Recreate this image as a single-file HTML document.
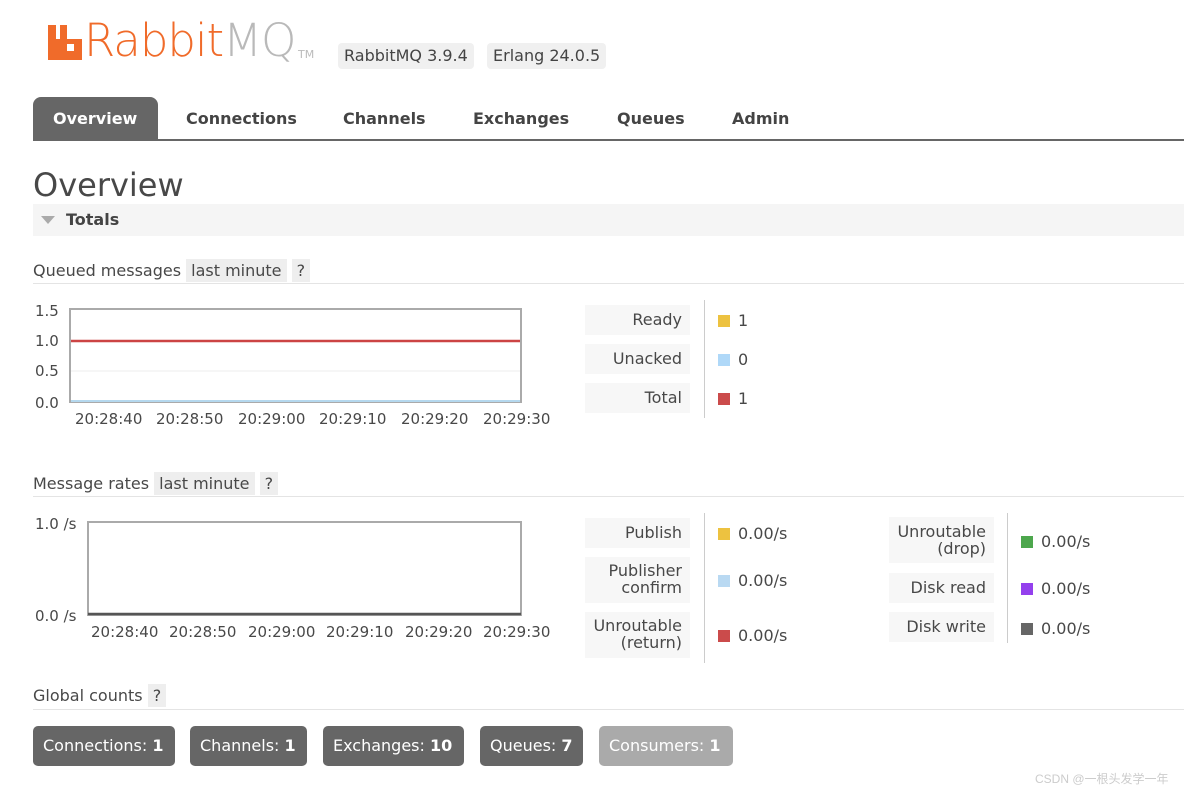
<!DOCTYPE html>
<html><head><meta charset="utf-8"><style>
*{margin:0;padding:0;box-sizing:border-box}
body{width:1184px;height:790px;background:#fff;position:relative;overflow:hidden;font-family:"DejaVu Sans","Liberation Sans",sans-serif;font-size:16px;color:#484848}
.a{position:absolute;white-space:nowrap}
.pill{background:#f0f0f0;border-radius:4px;padding:0 6px;height:26px;line-height:26px}
.tab{position:absolute;top:97px;height:43px;line-height:44px;font-weight:bold;color:#444}
.lbl{position:absolute;background:#f7f7f7;text-align:right;padding-right:8px;line-height:17px;width:106px}
.sw{display:inline-block;width:12px;height:12px;margin-right:8px;vertical-align:-1px}
.btn{position:absolute;top:726px;height:40px;line-height:40px;background:#666;color:#fff;border-radius:5px;padding:0 10px}
.btn b{font-weight:bold}
.hr{position:absolute;height:1px;background:#e4e4e4;left:33px;right:0}
</style></head><body>
<!-- logo -->
<div class="a" style="left:48px;top:25px;width:8px;height:16px;background:#f06b2a"></div>
<div class="a" style="left:60px;top:25px;width:7px;height:16px;background:#f06b2a"></div>
<div class="a" style="left:48px;top:39px;width:34px;height:21px;background:#f06b2a"></div>
<div class="a" style="left:67px;top:44px;width:7px;height:7px;background:#fff"></div>
<div class="a" style="left:84px;top:14px;font-family:'DejaVu Sans',sans-serif;font-size:45px;color:#f06b2a;letter-spacing:-1px;font-weight:300">Rabbit<span style="color:#b9b9b9">MQ</span></div>
<div class="a" style="left:298px;top:48px;font-size:11px;color:#bbb">TM</div>
<div class="a pill" style="left:338px;top:43px;color:#444">RabbitMQ 3.9.4</div>
<div class="a pill" style="left:487px;top:43px;color:#444">Erlang 24.0.5</div>
<!-- tabs -->
<div class="a" style="left:33px;top:97px;width:125px;height:43px;background:#666;border-radius:8px 8px 0 0"></div>
<div class="tab" style="left:53px;color:#fff">Overview</div>
<div class="tab" style="left:186px">Connections</div>
<div class="tab" style="left:343px">Channels</div>
<div class="tab" style="left:473px">Exchanges</div>
<div class="tab" style="left:617px">Queues</div>
<div class="tab" style="left:732px">Admin</div>
<div class="a" style="left:33px;top:139px;right:0;height:2px;background:#666"></div>
<div class="a" style="left:33px;top:166px;font-size:32px;color:#484848">Overview</div>
<div class="a" style="left:33px;top:204px;right:0;height:32px;background:#f5f5f5"></div>
<div class="a" style="left:41px;top:216px;width:0;height:0;border-left:7px solid transparent;border-right:7px solid transparent;border-top:8px solid #aaa"></div>
<div class="a" style="left:66px;top:210px;font-weight:bold;color:#444">Totals</div>
<!-- queued -->
<div class="a" style="left:33px;top:260px;line-height:22px">Queued messages <span style="background:#eee;padding:2px 5px">last minute</span> <span style="background:#eee;padding:2px 5px">?</span></div>
<div class="hr" style="top:283px"></div>
<svg class="a" style="left:33px;top:300px" width="530" height="130">
<g font-family="DejaVu Sans" font-size="15" fill="#484848">
<text x="2" y="16">1.5</text><text x="2" y="46">1.0</text><text x="2" y="76">0.5</text><text x="2" y="108">0.0</text>
<text x="42" y="124">20:28:40</text><text x="123" y="124">20:28:50</text><text x="205" y="124">20:29:00</text><text x="286" y="124">20:29:10</text><text x="368" y="124">20:29:20</text><text x="450" y="124">20:29:30</text></g>
<rect x="37" y="9" width="451" height="93" fill="#fff" stroke="#aaa" stroke-width="2"/>
<line x1="38" y1="71" x2="487" y2="71" stroke="#eee"/>
<line x1="38" y1="41" x2="487" y2="41" stroke="#c44" stroke-width="2.5"/>
<line x1="38" y1="101" x2="487" y2="101" stroke="#b5d8ee" stroke-width="2"/>
</svg>
<div class="lbl" style="left:585px;top:305px;height:30px;line-height:30px;width:105px">Ready</div>
<div class="lbl" style="left:585px;top:344px;height:30px;line-height:30px;width:105px">Unacked</div>
<div class="lbl" style="left:585px;top:383px;height:30px;line-height:30px;width:105px">Total</div>
<div class="a" style="left:704px;top:300px;width:1px;height:118px;background:#ccc"></div>
<div class="a" style="left:718px;top:311px"><span class="sw" style="background:#edc240"></span>1</div>
<div class="a" style="left:718px;top:350px"><span class="sw" style="background:#afd8f8"></span>0</div>
<div class="a" style="left:718px;top:389px"><span class="sw" style="background:#cb4b4b"></span>1</div>
<!-- rates -->
<div class="a" style="left:33px;top:473px;line-height:22px">Message rates <span style="background:#eee;padding:2px 5px">last minute</span> <span style="background:#eee;padding:2px 5px">?</span></div>
<div class="hr" style="top:496px"></div>
<svg class="a" style="left:33px;top:513px" width="530" height="130">
<g font-family="DejaVu Sans" font-size="15" fill="#484848">
<text x="2" y="16">1.0 /s</text><text x="2" y="108">0.0 /s</text>
<text x="58" y="124">20:28:40</text><text x="136" y="124">20:28:50</text><text x="215" y="124">20:29:00</text><text x="293" y="124">20:29:10</text><text x="372" y="124">20:29:20</text><text x="450" y="124">20:29:30</text></g>
<rect x="55" y="9" width="433" height="93" fill="#fff" stroke="#aaa" stroke-width="2"/>
<line x1="55" y1="101" x2="488" y2="101" stroke="#555" stroke-width="2.5"/>
</svg>
<div class="lbl" style="left:585px;top:518px;height:30px;line-height:30px;width:105px">Publish</div>
<div class="lbl" style="left:585px;top:557px;height:46px;padding-top:5px;width:105px">Publisher<br>confirm</div>
<div class="lbl" style="left:585px;top:612px;height:46px;padding-top:5px;width:105px">Unroutable<br>(return)</div>
<div class="a" style="left:704px;top:513px;width:1px;height:150px;background:#ccc"></div>
<div class="a" style="left:718px;top:524px"><span class="sw" style="background:#edc240"></span>0.00/s</div>
<div class="a" style="left:718px;top:571px"><span class="sw" style="background:#b9d9f2"></span>0.00/s</div>
<div class="a" style="left:718px;top:626px"><span class="sw" style="background:#cb4b4b"></span>0.00/s</div>
<div class="lbl" style="left:889px;top:517px;height:46px;padding-top:6px;width:105px">Unroutable<br>(drop)</div>
<div class="lbl" style="left:889px;top:573px;height:30px;line-height:30px;width:105px">Disk read</div>
<div class="lbl" style="left:889px;top:612px;height:30px;line-height:30px;width:105px">Disk write</div>
<div class="a" style="left:1007px;top:513px;width:1px;height:130px;background:#ccc"></div>
<div class="a" style="left:1021px;top:532px"><span class="sw" style="background:#4da74d"></span>0.00/s</div>
<div class="a" style="left:1021px;top:579px"><span class="sw" style="background:#9440ed"></span>0.00/s</div>
<div class="a" style="left:1021px;top:619px"><span class="sw" style="background:#666"></span>0.00/s</div>
<!-- global -->
<div class="a" style="left:33px;top:685px;line-height:22px">Global counts <span style="background:#eee;padding:2px 5px">?</span></div>
<div class="hr" style="top:709px"></div>
<div class="btn" style="left:33px;width:142px">Connections: <b>1</b></div>
<div class="btn" style="left:190px;width:117px">Channels: <b>1</b></div>
<div class="btn" style="left:323px;width:141px">Exchanges: <b>10</b></div>
<div class="btn" style="left:480px;width:103px">Queues: <b>7</b></div>
<div class="btn" style="left:599px;width:134px;background:#aaa">Consumers: <b>1</b></div>
<div class="a" style="left:1035px;top:770px;font-size:12px;color:#ccc;font-family:'Liberation Sans','Noto Sans CJK SC',sans-serif">CSDN @一根头发学一年</div>
</body></html>
